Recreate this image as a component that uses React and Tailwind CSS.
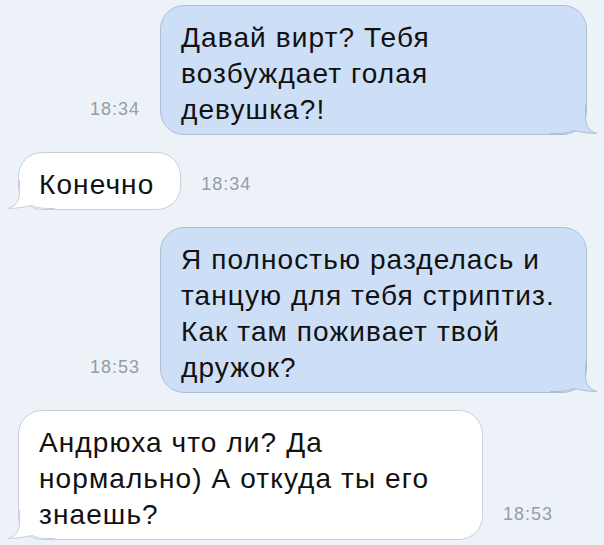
import React from 'react';

const font = { fontFamily: '"Liberation Sans", Arial, sans-serif' };

// Hooked tail drawn over the bubble's bottom corner; the left one is mirrored.
const Tail = ({ side, fill, stroke }) => {
    const edge = 'M35.5 0 V12 C35.5 21 39 26 47 28.5 C40 28.6 30 27 23 25.5 C19 27.5 14 28.5 6 28.5 H0';
    return (
        <svg
            width="50"
            height="30"
            viewBox="0 0 50 30"
            className={side === 'left' ? 'absolute -left-[14px] -bottom-px -scale-x-100' : 'absolute -right-[14px] -bottom-px'}
        >
            <path d={`M0 0 H35.5 ${edge.slice(7)} Z`} fill={fill} />
            <path d={edge} fill="none" stroke={stroke} strokeWidth="1" />
        </svg>
    );
};

const Time = ({ children, className }) => (
    <span className={`mb-[17px] text-[18px] leading-[18px] tracking-[1px] text-[#959da8] ${className}`}>
        {children}
    </span>
);

const bubbleText = 'relative whitespace-nowrap rounded-[24px] border pt-[14px] pb-[6px] text-[28px] leading-[36px] tracking-[1.1px] text-[#111]';

const Sent = ({ time, children }) => (
    <div className="flex items-end justify-end pr-[17px]">
        <Time className="mr-[20px]">{time}</Time>
        <div className={`${bubbleText} w-[427px] border-[#afbfd2] bg-[#cddff6] pl-[20px] pr-[14px]`}>
            <Tail side="right" fill="#cddff6" stroke="#afbfd2" />
            <div className="relative">{children}</div>
        </div>
    </div>
);

const Received = ({ time, width, children }) => (
    <div className="flex items-end pl-[18px]">
        <div className={`${bubbleText} border-[#c9d0da] bg-white pl-[20px] pr-[26px] ${width}`}>
            <Tail side="left" fill="#ffffff" stroke="#c9d0da" />
            <div className="relative">{children}</div>
        </div>
        <Time className="ml-[20px]">{time}</Time>
    </div>
);

export default function App() {
    return (
        <div className="flex min-h-screen w-[604px] flex-col gap-[17px] bg-[#edf2f9] pt-[5px]" style={font}>
            <Sent time="18:34">
                Давай вирт? Тебя
                <br />
                возбуждает голая
                <br />
                девушка?!
            </Sent>
            <Received time="18:34" width="">
                Конечно
            </Received>
            <Sent time="18:53">
                Я полностью разделась и
                <br />
                танцую для тебя стриптиз.
                <br />
                Как там поживает твой
                <br />
                дружок?
            </Sent>
            <Received time="18:53" width="w-[465px]">
                Андрюха что ли? Да
                <br />
                нормально) А откуда ты его
                <br />
                знаешь?
            </Received>
        </div>
    );
}
